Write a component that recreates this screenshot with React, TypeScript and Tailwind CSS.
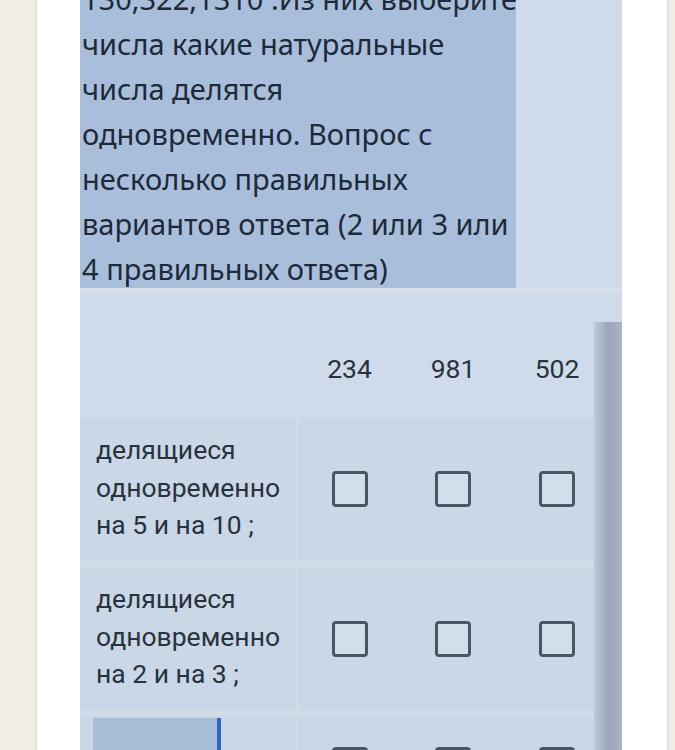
import React from "react";

const topLines = [
  "130,322,1310 .Из них выберите",
  "числа какие натуральные",
  "числа делятся",
  "одновременно. Вопрос с",
  "несколько правильных",
  "вариантов ответа (2 или 3 или",
  "4 правильных ответа)",
];

const columns = ["234", "981", "502"];

const Box = () => (
  <div className="h-[36px] w-[36px] rounded-[4px] border-[3px] border-[#4a5566] bg-[#d3deec]" />
);

const Row = ({ lines, height }: { lines: string[]; height: string }) => (
  <div className={`grid grid-cols-[218px_103px_104px_104px] bg-[#cad7e7] ${height}`}>
    <div className="border-r-2 border-[#d0dbea] pl-4 pt-[13px] text-[26.5px] leading-[37.5px] text-[#29323d]">
      {lines.map((l) => (
        <div key={l} className="whitespace-nowrap">
          {l}
        </div>
      ))}
    </div>
    {columns.map((c) => (
      <div key={c} className="flex items-center justify-center">
        <Box />
      </div>
    ))}
  </div>
);

export default function App() {
  return (
    <div className="flex h-[750px] w-[675px] overflow-hidden bg-[#f0ece6]">
      <div className="w-[36px] shrink-0" />
      <div className="w-[632px] shrink-0 border-x border-[#ddd8d0] bg-white pl-[43px]">
        <div className="relative h-[750px] w-[542px] bg-[#cfdbea] font-['Roboto',sans-serif]">
          <div className="relative flow-root h-[288px] w-[436px] bg-[#a9bedb]">
            <div className="-mt-[24px] pl-[2px] font-['Noto_Sans',sans-serif] text-[29px] leading-[45px] text-[#1d2a3a]">
              {topLines.map((l) => (
                <div key={l} className="whitespace-nowrap">
                  {l}
                </div>
              ))}
            </div>
            <div className="absolute bottom-[3px] left-[46px] h-[5px] w-[2px] bg-[#1d2a3a]" />
          </div>
          <div className="h-[5px] bg-[#d6e0ec]" />
          <div className="grid h-[125px] grid-cols-[218px_103px_104px_104px] pt-[61px] text-[26.5px] leading-[30px] text-[#29323d]">
            <div />
            {columns.map((c) => (
              <div key={c} className="text-center">
                {c}
              </div>
            ))}
          </div>
          <Row lines={["делящиеся", "одновременно", "на 5 и на 10 ;"]} height="h-[142px]" />
          <div className="h-[7px] bg-[#d0dbea]" />
          <Row lines={["делящиеся", "одновременно", "на 2 и на 3 ;"]} height="h-[143px]" />
          <div className="h-[6px] bg-[#d0dbea]" />
          <div className="grid h-[40px] grid-cols-[218px_103px_104px_104px] bg-[#cad7e7]">
            <div className="relative border-r-2 border-[#d0dbea] pl-[13px] pt-[2px]">
              <div className="flex h-full">
                <div className="h-full w-[124px] bg-[#a9bcd8]" />
                <div className="h-full w-[4px] bg-[#2f66d0]" />
              </div>
            </div>
            {columns.map((c) => (
              <div key={c} className="flex justify-center pt-[31px]">
                <Box />
              </div>
            ))}
          </div>
          <div className="absolute bottom-0 right-0 top-[322px] w-[28px] bg-gradient-to-r from-[#c0ccdc] via-[#98a6b8] to-[#aab6c6]" />
        </div>
      </div>
    </div>
  );
}
